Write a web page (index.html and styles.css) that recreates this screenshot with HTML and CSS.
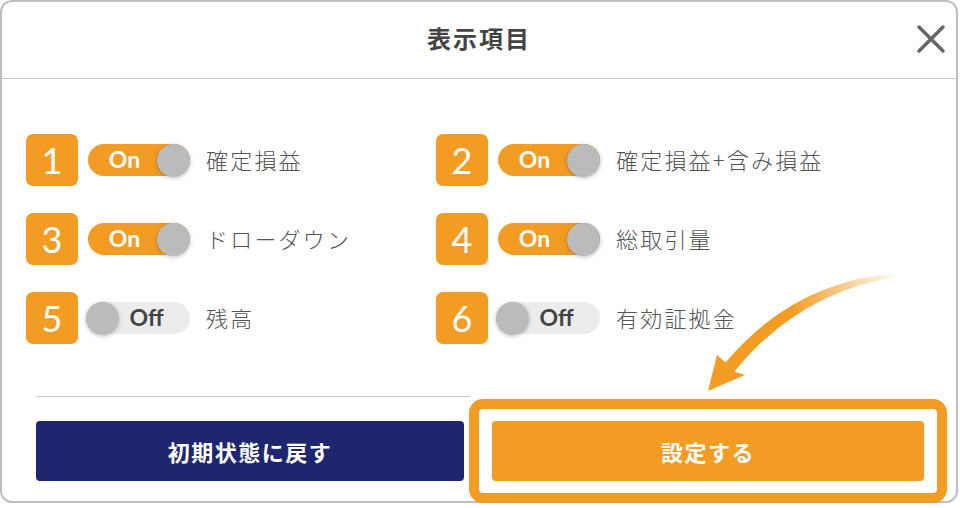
FILE: index.html
```html
<!DOCTYPE html>
<html lang="ja">
<head>
    <meta charset="UTF-8">
    <meta name="viewport" content="width=device-width, initial-scale=1.0">
    <title>表示項目</title>
    <link rel="stylesheet" href="styles.css">
</head>
<body>
    <div class="card">
        <!-- Header -->
        <header class="head">
            <span></span>
            <h1>表示項目</h1>
            <button class="close" aria-label="閉じる">
                <svg width="30" height="30" viewBox="0 0 30 30">
                    <path d="M3 3 L27 27 M27 3 L3 27" stroke="#666" stroke-width="3.5" stroke-linecap="round" fill="none"/>
                </svg>
            </button>
        </header>

        <!-- Items -->
        <div class="list">
            <div class="item">
                <span class="num">1</span>
                <span class="toggle on"><b>On</b><i></i></span>
                <span class="label">確定損益</span>
            </div>
            <div class="item">
                <span class="num">2</span>
                <span class="toggle on"><b>On</b><i></i></span>
                <span class="label">確定損益+含み損益</span>
            </div>
            <div class="item">
                <span class="num">3</span>
                <span class="toggle on"><b>On</b><i></i></span>
                <span class="label">ドローダウン</span>
            </div>
            <div class="item">
                <span class="num">4</span>
                <span class="toggle on"><b>On</b><i></i></span>
                <span class="label">総取引量</span>
            </div>
            <div class="item">
                <span class="num">5</span>
                <span class="toggle off"><i></i><b>Off</b></span>
                <span class="label">残高</span>
            </div>
            <div class="item">
                <span class="num">6</span>
                <span class="toggle off"><i></i><b>Off</b></span>
                <span class="label">有効証拠金</span>
            </div>
        </div>

        <div class="sep"></div>

        <!-- Footer buttons -->
        <div class="foot">
            <button class="btn reset">初期状態に戻す</button>
            <div class="highlight">
                <button class="btn save">設定する</button>
            </div>
        </div>

        <!-- Pointer arrow -->
        <svg class="arrow" width="960" height="508" viewBox="0 0 960 508">
            <defs>
                <linearGradient id="fade" gradientUnits="userSpaceOnUse" x1="900" y1="275" x2="790" y2="300">
                    <stop offset="0" stop-color="#f39c24" stop-opacity="0"/>
                    <stop offset="1" stop-color="#f39c24" stop-opacity="1"/>
                </linearGradient>
            </defs>
            <path d="M898 273.5 Q795 280 725.5 362.5 L717 355 L708 391 L745 375 L734.5 371.5 Q800 291 898 277 Z" fill="url(#fade)"/>
        </svg>
    </div>
</body>
</html>
```

FILE: styles.css
```css
body {
    margin: 0;
    font-family: 'Noto Sans CJK JP', sans-serif;
    background-color: #fff;
}

.card {
    position: relative;
    width: 958px;
    height: 503px;
    box-sizing: border-box;
    border: 2px solid #bfbfbf;
    border-radius: 12px;
    background: #fff;
}

/* Header */
.head {
    height: 77px;
    box-sizing: border-box;
    padding-bottom: 2px;
    border-bottom: 1px solid #c4c4c4;
    display: grid;
    grid-template-columns: 1fr auto 1fr;
    align-items: center;
}

.head h1 {
    margin: 0 0 3px;
    font-size: 24px;
    font-weight: bold;
    letter-spacing: 2px;
    color: #444;
}

.close {
    justify-self: end;
    margin-right: 10px;
    padding: 0;
    border: none;
    background: none;
    display: flex;
    cursor: pointer;
}

/* Items */
.list {
    padding: 55px 0 0 24px;
    display: grid;
    grid-template-columns: 410px 410px;
    row-gap: 27px;
}

.item {
    display: flex;
    align-items: center;
    height: 52px;
}

.num {
    width: 52px;
    height: 52px;
    border-radius: 7px;
    background-color: #f39c24;
    color: #fff;
    font-family: 'Lato', sans-serif;
    font-size: 36px;
    display: flex;
    justify-content: center;
    align-items: center;
}

.toggle {
    margin-left: 10px;
    width: 102px;
    height: 32px;
    border-radius: 16px;
    display: flex;
    align-items: center;
    box-sizing: border-box;
}

.toggle b {
    flex: 1;
    text-align: center;
    font-family: 'Lato', sans-serif;
    font-size: 23px;
    font-weight: bold;
    line-height: 1;
    padding-bottom: 2px;
}

.toggle i {
    width: 33px;
    height: 33px;
    border-radius: 50%;
    background-color: #bbb;
    box-shadow: 0 1px 4px rgba(0, 0, 0, 0.25);
}

.toggle.on {
    background-color: #f39c24;
    color: #fff;
}

.toggle.on b {
    padding-left: 4px;
}

.toggle.off {
    margin-left: 8px;
    width: 104px;
    background-color: #ececec;
    color: #444;
}

.toggle.off b {
    padding-right: 16px;
}

.label {
    margin-left: 16px;
    padding-bottom: 3px;
    font-size: 22px;
    font-weight: 300;
    letter-spacing: 2.2px;
    color: #555;
}

/* Footer */
.sep {
    margin: 52px 0 0 34px;
    width: 434px;
    border-top: 1px solid #ccc;
}

.foot {
    display: flex;
    align-items: flex-start;
    padding-left: 34px;
}

.btn {
    height: 60px;
    border: none;
    border-radius: 4px;
    color: #fff;
    font-family: 'Noto Sans CJK JP', sans-serif;
    font-size: 22px;
    font-weight: bold;
    letter-spacing: 1.5px;
    cursor: pointer;
}

.reset {
    margin-top: 24px;
    width: 428px;
    background-color: #1f2670;
}

.highlight {
    margin: 2px 0 0 5px;
    border: 10px solid #f39c24;
    border-radius: 14px;
    padding: 12px 13px;
    background: #fff;
}

.save {
    width: 432px;
    background-color: #f39c24;
}

.arrow {
    position: absolute;
    left: -2px;
    top: -2px;
    pointer-events: none;
}
```
